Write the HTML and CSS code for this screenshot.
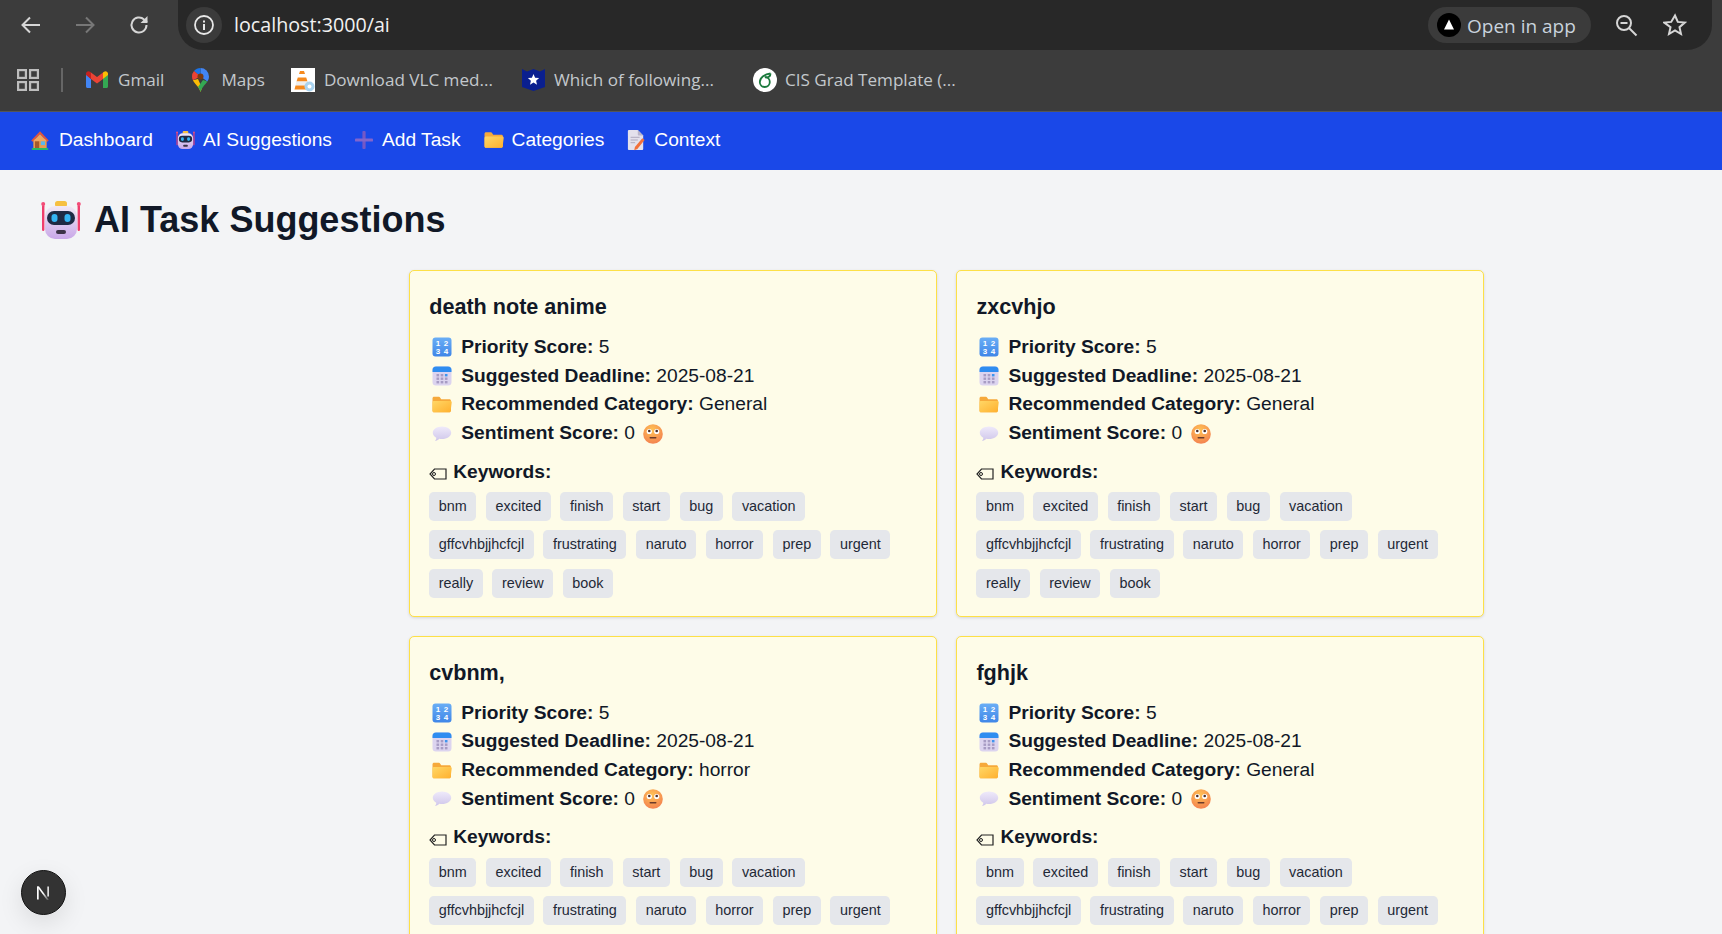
FILE: index.html
```html
<!DOCTYPE html>
<html lang="en">
<head>
<meta charset="utf-8">
<title>AI Task Suggestions</title>
<link rel="stylesheet" href="styles.css">
</head>
<body>
<svg class="defs" width="0" height="0" aria-hidden="true">
  <defs>
    <linearGradient id="gFolder" x1="0" y1="0" x2="1" y2="1"><stop offset="0" stop-color="#ffd766"/><stop offset="1" stop-color="#ffb02e"/></linearGradient>
    <linearGradient id="gRobot" x1="0" y1="0" x2="0" y2="1"><stop offset="0" stop-color="#f1e8f6"/><stop offset="1" stop-color="#c9a8e8"/></linearGradient>
    <linearGradient id="gBlue" x1="0" y1="0" x2="0" y2="1"><stop offset="0" stop-color="#6aaef5"/><stop offset="1" stop-color="#3f86e8"/></linearGradient>
    <linearGradient id="gBubble" x1="0" y1="0" x2="0" y2="1"><stop offset="0" stop-color="#efeafa"/><stop offset="1" stop-color="#cfc6ea"/></linearGradient>
    <radialGradient id="gFace" cx=".45" cy=".3" r=".8"><stop offset="0" stop-color="#ffc255"/><stop offset="1" stop-color="#f27a4f"/></radialGradient>
    <symbol id="i-robot" viewBox="0 0 40 40">
      <rect x="1" y="5" width="2.4" height="26" rx="1.2" fill="#ef3e6d"/>
      <rect x="36.6" y="5" width="2.4" height="26" rx="1.2" fill="#ef3e6d"/>
      <circle cx="2.2" cy="4" r="2" fill="#f24d78"/><circle cx="37.8" cy="4" r="2" fill="#f24d78"/>
      <rect x="14" y="1" width="12" height="6" rx="2.5" fill="#f6c042"/>
      <rect x="4" y="6" width="32" height="33" rx="10" fill="url(#gRobot)"/>
      <rect x="6" y="11" width="28" height="14" rx="7" fill="#1e2a44"/>
      <rect x="10.5" y="14" width="6" height="8" rx="3" fill="#35b4f2"/>
      <rect x="23.5" y="14" width="6" height="8" rx="3" fill="#35b4f2"/>
      <rect x="15" y="30" width="10" height="4" rx="2" fill="#3b3346"/>
    </symbol>
    <symbol id="i-house" viewBox="0 0 24 24">
      <rect x="2" y="21" width="20" height="2.5" rx="1" fill="#29b765"/>
      <path d="M4 10h16v11H4z" fill="#e99a4f"/>
      <path d="M12 1 1.5 12l1.6 1.4L12 4.4l8.9 9 1.6-1.4z" fill="#e2553b"/>
      <path d="M12 4.400 20 12.500V13H4v-.5z" fill="#f0a860"/>
      <rect x="6" y="13" width="5" height="8" fill="#a55a2a"/>
      <rect x="13" y="13" width="5" height="4.500" fill="#5bb7ee"/>
    </symbol>
    <symbol id="i-plus" viewBox="0 0 20 20">
      <rect x="8.200" y="0" width="3.600" height="20" rx="1" fill="#7558c6"/>
      <rect x="0" y="8.200" width="20" height="3.600" rx="1" fill="#8265cc"/>
    </symbol>
    <symbol id="i-folder" viewBox="0.500 2.500 19.500 16">
      <path d="M1 4.500C1 3.600 1.700 3 2.500 3h4.700c.6 0 1 .3 1.300.8L9.500 5.500h8c.8 0 1.500.7 1.500 1.500v9.500c0 .8-.7 1.500-1.500 1.500h-15C1.700 18 1 17.300 1 16.500z" fill="#f6a93b"/>
      <path d="M1 8.500c0-.8.7-1.500 1.500-1.500h16c.8 0 1.300.7 1.200 1.500l-1 8c-.1.8-.7 1.500-1.500 1.500h-15c-.8 0-1.200-.7-1.200-1.500z" fill="url(#gFolder)"/>
    </symbol>
    <symbol id="i-doc" viewBox="0 0 20 24">
      <path d="M2 1h10l6 6v15a1 1 0 0 1-1 1H2a1 1 0 0 1-1-1V2a1 1 0 0 1 1-1z" fill="#e4e1ec"/>
      <path d="M12 1l6 6h-5a1 1 0 0 1-1-1z" fill="#b9b4c9"/>
      <path d="M4 9h10M4 12h8M4 15h5" stroke="#a9a4b8" stroke-width="1"/>
      <path d="M17 10l2.500 2-8 10-3.500 1.500.8-3.700z" fill="#f2703a"/>
    </symbol>
    <symbol id="i-nums" viewBox="0 0 20 20">
      <rect x="0.500" y="0.500" width="19" height="19" rx="3" fill="url(#gBlue)"/>
      <text x="6" y="8.800" class="num-glyph" text-anchor="middle">1</text>
      <text x="14" y="8.800" class="num-glyph" text-anchor="middle">2</text>
      <text x="6" y="17" class="num-glyph" text-anchor="middle">3</text>
      <text x="14" y="17" class="num-glyph" text-anchor="middle">4</text>
    </symbol>
    <symbol id="i-cal" viewBox="0 0 20 20">
      <rect x="0.500" y="0.500" width="19" height="19" rx="3.500" fill="#dcd4ef"/>
      <path d="M.5 6V4A3.500 3.500 0 0 1 4 .5h12A3.500 3.500 0 0 1 19.500 4v2z" fill="#2f8df0"/>
      <g fill="#a79cc4">
        <rect x="4.500" y="8" width="2.600" height="2.400"/><rect x="8.700" y="8" width="2.600" height="2.400"/><rect x="12.900" y="8" width="2.600" height="2.400" fill="#3f95ee"/>
        <rect x="4.500" y="11.500" width="2.600" height="2.400"/><rect x="8.700" y="11.500" width="2.600" height="2.400"/><rect x="12.900" y="11.500" width="2.600" height="2.400"/>
        <rect x="4.500" y="15" width="2.600" height="2.400"/><rect x="8.700" y="15" width="2.600" height="2.400"/><rect x="12.900" y="15" width="2.600" height="2.400"/>
      </g>
    </symbol>
    <symbol id="i-bubble" viewBox="0 0 20 16.500">
      <path d="M10 .5c5.200 0 9.500 2.900 9.500 6.500s-4.300 6.500-9.500 6.500c-1 0-2-.1-2.900-.3C6 14.500 4.300 15.500 2.800 15.500c.8-.8 1.300-2 1.300-3.300C1.900 11 .5 9.100.5 7 .5 3.400 4.800.5 10 .5z" fill="url(#gBubble)"/>
    </symbol>
    <symbol id="i-face" viewBox="0 0 20 20">
      <circle cx="10" cy="10" r="9.800" fill="url(#gFace)"/>
      <circle cx="6.300" cy="7.500" r="2.600" fill="#fff"/><circle cx="13.700" cy="7.500" r="2.600" fill="#fff"/>
      <circle cx="6.300" cy="7" r="1.300" fill="#4a2e2a"/><circle cx="13.700" cy="7" r="1.300" fill="#4a2e2a"/>
      <rect x="6.500" y="13" width="7" height="1.500" rx=".7" fill="#6b3a2a"/>
    </symbol>
    <symbol id="i-label" viewBox="0 0 18 12">
      <path d="M5.500 1H17v10H5.500L1 6z" fill="none" stroke="#222" stroke-width="1.200"/>
      <circle cx="5" cy="6" r="1.500" fill="none" stroke="#222" stroke-width="1"/>
    </symbol>
  </defs>
</svg>

<header class="chrome">
  <div class="toolbar">
    <button class="nav-btn"><svg width="24" height="24" viewBox="0 0 24 24"><path d="M21 12H4M11 4.500 3.500 12l7.500 7.500" fill="none" stroke="#d6d6d6" stroke-width="2"/></svg></button>
    <button class="nav-btn"><svg width="24" height="24" viewBox="0 0 24 24"><path d="M3 12h17M13 4.500l7.500 7.500-7.500 7.500" fill="none" stroke="#777" stroke-width="2"/></svg></button>
    <button class="nav-btn"><svg width="24" height="24" viewBox="0 0 24 24"><path d="M19.500 12a7.500 7.500 0 1 1-2.400-5.500L20 9" fill="none" stroke="#d6d6d6" stroke-width="2"/><path d="M20.500 3v7h-7z" fill="#d6d6d6"/></svg></button>
    <div class="omnibox">
      <span class="site-info"><svg width="24" height="24" viewBox="0 0 24 24"><circle cx="12" cy="12" r="9" fill="none" stroke="#e8e8e8" stroke-width="1.800"/><rect x="11" y="11" width="2" height="6" fill="#e8e8e8"/><rect x="11" y="7.500" width="2" height="2" fill="#e8e8e8"/></svg></span>
      <span class="url">localhost:3000/ai</span>
      <span class="open-app"><svg width="24" height="24" viewBox="0 0 24 24"><circle cx="12" cy="12" r="12" fill="#000"/><path d="M12 6.500 17 16.500H7z" fill="#fff"/></svg><span class="open-label">Open in app</span></span>
      <svg class="omni-zoom" width="24" height="24" viewBox="0 0 24 24"><circle cx="10" cy="10" r="7" fill="none" stroke="#d6d6d6" stroke-width="2"/><path d="M15 15l7.500 7.500" stroke="#d6d6d6" stroke-width="2"/><path d="M6.500 10h7" stroke="#d6d6d6" stroke-width="2"/></svg>
      <svg class="omni-star" width="24" height="24" viewBox="0 0 24 24"><path d="M12 2.500l2.800 6.400 6.900.7-5.200 4.600 1.500 6.800-6-3.500-6 3.500 1.500-6.800L1.300 9.600l6.900-.7z" fill="none" stroke="#d6d6d6" stroke-width="2" stroke-linejoin="miter"/></svg>
    </div>
  </div>
  <div class="bookmarks">
    <svg class="apps" width="22" height="22" viewBox="0 0 22 22"><g fill="none" stroke="#bdbdbd" stroke-width="2.200"><rect x="1.100" y="1.100" width="7.800" height="7.800"/><rect x="13.100" y="1.100" width="7.800" height="7.800"/><rect x="1.100" y="13.100" width="7.800" height="7.800"/><rect x="13.100" y="13.100" width="7.800" height="7.800"/></g></svg>
    <span class="sep"></span>
    <a class="bm bm-gmail"><svg width="22" height="17" viewBox="0 0 22 17"><path d="M0 3v12.500C0 16.300.7 17 1.500 17H5V8z" fill="#4285f4"/><path d="M22 3v12.500c0 .8-.7 1.500-1.500 1.500H17V8z" fill="#34a853"/><path d="M17 1.500V8l5-4V2.500C22 .5 19.500-.6 18 .7z" fill="#fbbc04"/><path d="M5 8V1.500L11 6l6-4.500V8l-6 4.500z" fill="#ea4335"/><path d="M0 2.500V4l5 4V1.500L4 .7C2.500-.6 0 .5 0 2.500z" fill="#c5221f"/></svg>Gmail</a>
    <a class="bm bm-maps"><svg width="17" height="24" viewBox="0 0 17 24"><path d="M8.500 0A8.500 8.500 0 0 1 17 8.500c0 2-.7 3.500-1.600 4.900L8.500 8.500z" fill="#4285f4"/><path d="M8.500 0C5.900 0 3.600 1.200 2 3l6.500 5.500z" fill="#1a73e8"/><path d="M2 3A8.500 8.500 0 0 0 0 8.500c0 1.500.3 2.700.9 3.800L8.500 8.500z" fill="#ea4335"/><path d="M.9 12.300C2.500 15.800 6.500 18 8.500 24L10 20 6 11z" fill="#fbbc04"/><path d="M15.400 13.400C13 17 10 19 8.500 24 8 22 7 20.300 6 19l5-7z" fill="#34a853"/><circle cx="8.500" cy="8.500" r="3" fill="#7a3a10"/></svg>Maps</a>
    <a class="bm bm-vlc"><svg width="24" height="24" viewBox="0 0 24 24"><rect width="24" height="24" fill="#fff"/><path d="M9 3h4l1 3H8z" fill="#f58a1f"/><path d="M8 6h6l1.200 3.500H6.800z" fill="#fff"/><path d="M6.800 9.500h8.400l1.300 4H5.500z" fill="#f58a1f"/><path d="M5.500 13.500h11l1 4H4.500z" fill="#eee"/><path d="M4.500 17.500h13l1 4h-15z" fill="#f58a1f"/><circle cx="18.500" cy="18.500" r="5" fill="#a9d3f0"/><circle cx="18.500" cy="18.500" r="2" fill="#fff"/></svg>Download VLC med...</a>
    <a class="bm bm-which"><svg width="23" height="23" viewBox="0 0 23 23"><path d="M0 1 5 3.500 11.500 1 18 3.500 23 1V19l-11.500 4L0 19z" fill="#0a1f8f"/><path d="M11.500 6l1.600 3.700 4 .4-3 2.700.9 3.900-3.500-2.100-3.500 2.100.9-3.900-3-2.700 4-.4z" fill="#fff"/></svg>Which of following...</a>
    <a class="bm bm-cis"><svg width="24" height="24" viewBox="0 0 24 24"><circle cx="12" cy="12" r="12" fill="#fff"/><path d="M17.500 5.500C12 6 6.800 9.500 6.800 14a5 5 0 1 0 5-5" fill="none" stroke="#1b7a3d" stroke-width="1.800"/><path d="M17.500 5.500c0 3-1.800 4-5 4" fill="none" stroke="#1b7a3d" stroke-width="1.800"/></svg>CIS Grad Template (...</a>
  </div>
</header>

<nav class="topnav">
  <a class="nav-link"><svg width="20" height="21"><use href="#i-house"/></svg>Dashboard</a>
  <a class="nav-link nav-tight"><svg width="19" height="22"><use href="#i-robot"/></svg>AI Suggestions</a>
  <a class="nav-link"><svg width="18" height="22"><use href="#i-plus"/></svg>Add Task</a>
  <a class="nav-link nav-tight"><svg width="20" height="18"><use href="#i-folder"/></svg>Categories</a>
  <a class="nav-link"><svg width="18" height="22"><use href="#i-doc"/></svg>Context</a>
</nav>

<main class="page">
  <h1 class="title"><svg width="40" height="40"><use href="#i-robot"/></svg>AI Task Suggestions</h1>
  <section class="grid">

    <article class="card">
      <h2>death note anime</h2>
      <p class="row"><svg width="20" height="20"><use href="#i-nums"/></svg><b>Priority Score:</b> 5</p>
      <p class="row"><svg width="20" height="20"><use href="#i-cal"/></svg><b>Suggested Deadline:</b> 2025-08-21</p>
      <p class="row"><svg width="20" height="17"><use href="#i-folder"/></svg><b>Recommended Category:</b> General</p>
      <p class="row"><svg width="20" height="16"><use href="#i-bubble"/></svg><b>Sentiment Score:</b> 0 <svg class="face" width="20" height="20"><use href="#i-face"/></svg></p>
      <p class="kw"><svg width="18" height="12"><use href="#i-label"/></svg><b>Keywords:</b></p>
      <div class="tags"><span>bnm</span><span>excited</span><span>finish</span><span>start</span><span>bug</span><span>vacation</span><span>gffcvhbjjhcfcjl</span><span>frustrating</span><span>naruto</span><span>horror</span><span>prep</span><span>urgent</span><span>really</span><span>review</span><span>book</span></div>
    </article>

    <article class="card">
      <h2>zxcvhjo</h2>
      <p class="row"><svg width="20" height="20"><use href="#i-nums"/></svg><b>Priority Score:</b> 5</p>
      <p class="row"><svg width="20" height="20"><use href="#i-cal"/></svg><b>Suggested Deadline:</b> 2025-08-21</p>
      <p class="row"><svg width="20" height="17"><use href="#i-folder"/></svg><b>Recommended Category:</b> General</p>
      <p class="row"><svg width="20" height="16"><use href="#i-bubble"/></svg><b>Sentiment Score:</b> 0 <svg class="face" width="20" height="20"><use href="#i-face"/></svg></p>
      <p class="kw"><svg width="18" height="12"><use href="#i-label"/></svg><b>Keywords:</b></p>
      <div class="tags"><span>bnm</span><span>excited</span><span>finish</span><span>start</span><span>bug</span><span>vacation</span><span>gffcvhbjjhcfcjl</span><span>frustrating</span><span>naruto</span><span>horror</span><span>prep</span><span>urgent</span><span>really</span><span>review</span><span>book</span></div>
    </article>

    <article class="card">
      <h2>cvbnm,</h2>
      <p class="row"><svg width="20" height="20"><use href="#i-nums"/></svg><b>Priority Score:</b> 5</p>
      <p class="row"><svg width="20" height="20"><use href="#i-cal"/></svg><b>Suggested Deadline:</b> 2025-08-21</p>
      <p class="row"><svg width="20" height="17"><use href="#i-folder"/></svg><b>Recommended Category:</b> horror</p>
      <p class="row"><svg width="20" height="16"><use href="#i-bubble"/></svg><b>Sentiment Score:</b> 0 <svg class="face" width="20" height="20"><use href="#i-face"/></svg></p>
      <p class="kw"><svg width="18" height="12"><use href="#i-label"/></svg><b>Keywords:</b></p>
      <div class="tags"><span>bnm</span><span>excited</span><span>finish</span><span>start</span><span>bug</span><span>vacation</span><span>gffcvhbjjhcfcjl</span><span>frustrating</span><span>naruto</span><span>horror</span><span>prep</span><span>urgent</span></div>
    </article>

    <article class="card">
      <h2>fghjk</h2>
      <p class="row"><svg width="20" height="20"><use href="#i-nums"/></svg><b>Priority Score:</b> 5</p>
      <p class="row"><svg width="20" height="20"><use href="#i-cal"/></svg><b>Suggested Deadline:</b> 2025-08-21</p>
      <p class="row"><svg width="20" height="17"><use href="#i-folder"/></svg><b>Recommended Category:</b> General</p>
      <p class="row"><svg width="20" height="16"><use href="#i-bubble"/></svg><b>Sentiment Score:</b> 0 <svg class="face" width="20" height="20"><use href="#i-face"/></svg></p>
      <p class="kw"><svg width="18" height="12"><use href="#i-label"/></svg><b>Keywords:</b></p>
      <div class="tags"><span>bnm</span><span>excited</span><span>finish</span><span>start</span><span>bug</span><span>vacation</span><span>gffcvhbjjhcfcjl</span><span>frustrating</span><span>naruto</span><span>horror</span><span>prep</span><span>urgent</span></div>
    </article>

  </section>
</main>

<div class="dev-badge"><svg width="20" height="20" viewBox="1 0 20 20"><defs><linearGradient id="gN" x1="0" y1="0" x2="1" y2="1"><stop offset=".5" stop-color="#fff"/><stop offset="1" stop-color="#fff" stop-opacity=".1"/></linearGradient></defs><path d="M4 3.500h1.700v13H4z" fill="#fff"/><path d="M4 3.500h2l10 13.500h-2z" fill="url(#gN)"/><path d="M14.300 3.500H16v10h-1.700z" fill="#ddd"/></svg></div>
</body>
</html>
```
FILE: styles.css
```css
* { box-sizing: border-box; }
html, body { margin: 0; padding: 0; height: 934px; overflow: hidden; }
body { background: #f3f4f6; font-family: "Liberation Sans", Arial, sans-serif; color: #111827; }
.defs { position: absolute; }
.num-glyph { font: 700 8px "Liberation Sans", sans-serif; fill: #fff; }

.chrome { background: #3c3c3c; font-family: "Open Sans", "Noto Sans", sans-serif; }
.toolbar { height: 50px; display: flex; align-items: center; padding: 0 10px 0 0; }
.nav-btn { width: 54px; height: 40px; padding: 0; border: 0; background: none; display: flex; align-items: center; justify-content: center; }
.toolbar .nav-btn:first-child { margin-left: 4px; }
.omnibox { flex: 1; margin-left: 12px; height: 50px; background: #282828; border-radius: 0 0 25px 25px; display: flex; align-items: center; padding: 0 25px 0 8px; }
.site-info { width: 36px; height: 36px; border-radius: 50%; background: #3b3b3b; display: flex; align-items: center; justify-content: center; }
.url { margin: 0 0 2px 12px; font-size: 19.700px; color: #f1f1f1; }
.open-app { margin-left: auto; height: 36px; width: 163px; border-radius: 18px; background: #3b3b3b; color: #c9d3dd; display: flex; align-items: center; gap: 6px; padding-left: 9px; font-size: 19px; }
.open-label { margin-top: 2px; }
.omni-zoom { margin-left: 23px; }
.omni-star { margin-left: 25px; }

.bookmarks { height: 62px; padding-bottom: 2px; border-bottom: 1px solid #555; display: flex; align-items: center; padding-left: 17px; }
.apps { flex: none; }
.sep { width: 2px; height: 24px; background: #666; margin: 0 23px 0 22px; }
.bm { display: flex; align-items: center; color: #c3c8cc; font-size: 17.100px; line-height: 24px; white-space: nowrap; }
.bm-gmail { gap: 10px; }
.bm-maps { margin-left: 28px; gap: 12px; }
.bm-vlc { margin-left: 26px; gap: 9px; }
.bm-which { margin-left: 29px; gap: 9px; }
.bm-cis { margin-left: 39px; gap: 8px; }

.topnav { height: 58px; padding-bottom: 2px; background: #1a48e8; display: flex; align-items: center; gap: 23px; padding-left: 30px; }
.nav-link { display: flex; align-items: center; gap: 9px; color: #fff; font-size: 19.200px; }
.nav-tight { gap: 8px; }

.page { padding: 0 41px; }
.title { margin: 30px 0 0; height: 40px; display: flex; align-items: center; gap: 13px; font-size: 36px; line-height: 40px; font-weight: 700; color: #111827; }
.grid { margin: 30px 0 0 368px; width: 1075.200px; display: grid; grid-template-columns: 1fr 1fr; gap: 19.200px; align-items: start; }
.card { background: #fefce8; border: 1.200px solid #fde047; border-radius: 5px; padding: 19.200px 19.200px 18.200px; box-shadow: 0 1px 3px rgba(0,0,0,.12); }
.card h2 { margin: 0 0 9px; font-size: 21.600px; line-height: 33.600px; font-weight: 700; }
.row { margin: 0; height: 28.800px; font-size: 19.200px; line-height: 28.800px; display: flex; align-items: center; white-space: pre; padding-left: 3px; }
.row > svg:first-child { margin-right: 9px; flex: none; }
.row b { font-weight: 700; }
.face { margin-left: 3px; }
.kw { margin: 9.600px 0 5.600px; height: 28.800px; font-size: 19.200px; line-height: 28.800px; display: flex; align-items: center; gap: 6px; }
.kw svg { margin-top: 5px; }
.tags { display: flex; flex-wrap: wrap; gap: 9.600px; }
.tags span { height: 28.800px; line-height: 28.800px; padding: 0 9.600px; background: #e5e7eb; border-radius: 4.800px; font-size: 14.400px; color: #1f2937; }

.dev-badge { position: fixed; left: 21px; top: 870px; width: 45px; height: 45px; border-radius: 50%; background: #333; border: 1.500px solid #111; box-shadow: 0 8px 24px rgba(0,0,0,.1); display: flex; align-items: center; justify-content: center; }
```
